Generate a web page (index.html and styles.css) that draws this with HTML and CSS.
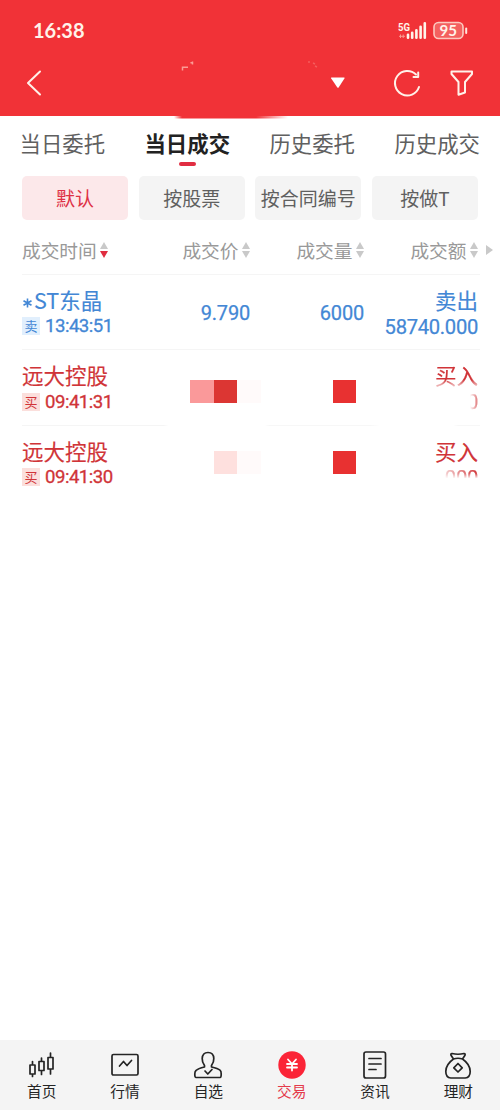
FILE: index.html
```html
<!DOCTYPE html>
<html lang="zh-CN">
<head>
<meta charset="utf-8">
<title>当日成交</title>
<link rel="stylesheet" href="styles.css">
</head>
<body>
<div class="app">
  <header class="header">
    <div class="status">
      <span class="clock">16:38</span>
      <svg class="signal" width="70" height="22" viewBox="0 0 70 22">
        <text class="net" x="0" y="11.5" textLength="12" lengthAdjust="spacingAndGlyphs">5G</text>
        <g class="faint"><path d="M1 17.300h6M2.500 15.500v3.500M5.200 15.500v3.500"/></g>
        <path class="bars" d="M10 18.700v-3M14.200 18.700v-5M18.400 18.700v-7.500M22.600 18.700v-11M26.800 18.700v-14.500"/>
        <rect class="cell" x="36" y="3.500" width="29" height="16" rx="4.500"/>
        <path class="tip" d="M68.200 9.500v4.500"/>
        <text class="charge" x="41.500" y="17" textLength="17.500" lengthAdjust="spacingAndGlyphs">95</text>
      </svg>
    </div>
    <svg class="toolbar" width="500" height="68" viewBox="0 0 500 68">
      <defs><linearGradient id="edge"><stop offset="0" stop-color="#f13237" stop-opacity="0"/><stop offset=".07" stop-color="#f13237"/><stop offset=".72" stop-color="#f13237"/><stop offset="1" stop-color="#f13237" stop-opacity="0"/></linearGradient></defs>
      <path class="line" d="M40 21.500 28 33l12 11.500"/>
      <path class="smudge" d="M182.500 20.500v-3.300h5.500M190.500 13l2-.800M192.500 11.500v3"/>
      <path class="smudge dim" d="M308 12h2M313 13l2 1M315 16l2 1"/>
      <path class="solid" d="M331.500 27.500h12.500q1 0 .4 1l-5.600 8.800q-.8 1-1.600 0l-6-8.800q-.5-1 .3-1z"/>
      <path class="line" d="M419 37A12.300 12.300 0 1 1 416 24.500M413.500 27h4.700v-4.500"/>
      <path class="line" d="M451.500 21.500h20.500v2.500l-7 8v10.500l-6.500 2.200V32l-7-8z"/>
      <rect x="174" y="65" width="114" height="3.500" fill="url(#edge)"/>
    </svg>
  </header>
  <nav class="tabs">
    <span>当日委托</span><span class="current">当日成交</span><span>历史委托</span><span>历史成交</span>
  </nav>
  <div class="chips">
    <span class="chip chosen">默认</span><span class="chip">按股票</span><span class="chip">按合同编号</span><span class="chip">按做T</span>
  </div>
  <div class="cols head">
    <span>成交时间<i class="sort desc"></i></span>
    <span>成交价<i class="sort"></i></span>
    <span>成交量<i class="sort"></i></span>
    <span>成交额<i class="sort"></i></span>
    <i class="more"></i>
  </div>
  <main>
    <section class="cols row sell">
      <div><div class="name"><svg class="star" width="12" height="12" viewBox="0 0 12 12"><path d="M5.500 1.500v9M1.500 3.700l8 4.600M9.500 3.700l-8 4.600"/></svg>ST东晶</div><div class="time"><b>卖</b><span>13:43:51</span></div></div>
      <div class="num">9.790</div>
      <div class="num">6000</div>
      <div class="amount"><div class="name">卖出</div><div class="sum">58740.000</div></div>
    </section>
    <section class="cols row buy">
      <div><div class="name">远大控股</div><div class="time"><b>买</b><span>09:41:31</span></div></div>
      <div class="mosaic price"><i class="pink"></i><i class="deep"></i><i class="pale"></i></div>
      <div class="mosaic volume"><i class="red"></i></div>
      <div class="amount"><div class="name worn">买入</div><div class="sum half">0</div></div>
    </section>
    <section class="cols row buy last">
      <div><div class="name">远大控股</div><div class="time"><b>买</b><span>09:41:30</span></div></div>
      <div class="mosaic price"><i class="blush"></i><i class="pale"></i></div>
      <div class="mosaic volume"><i class="red"></i></div>
      <div class="amount"><div class="name">买入</div><div class="sum tops">.000</div></div>
    </section>
  </main>
  <footer class="dock">
    <a><svg width="30" height="30" viewBox="0 0 30 30"><path d="M3 15h5v9H3zM12 11.500h5v9h-5zM21 7.500h5v11.500h-5zM5.500 11.500v3.500M5.500 24v2.500M14.500 8v3.500M14.500 20.500v4M23.500 3v4.500M23.500 19v5"/></svg>首页</a>
    <a><svg width="30" height="30" viewBox="0 0 30 30"><rect x="2" y="4.500" width="26" height="20.500" rx="1.500"/><path d="M9.500 16l4-4.500 3.500 4 4.500-5"/></svg>行情</a>
    <a><svg width="30" height="30" viewBox="0 0 30 30"><path d="M11.500 15.500Q9 12 9.200 8.500C9.400 4.500 11.500 2.500 15 2.500s5.700 2 5.800 6Q21 12 18.500 15.500v1.500q6.500 1.500 8.500 3.200 1.300 1 1.200 3.800 0 3.500-1 3.500H2.800q-1 0-1-3.500 0-2.500 1.200-3.500 2-2 8.500-3.500zM12 21l2.800 3 4.200-4.500"/></svg>自选</a>
    <a class="active"><svg width="30" height="30" viewBox="0 0 30 30"><circle cx="15" cy="15" r="13.700"/><path class="yen" d="M11 9.500l4 4.500 4-4.500M10 14h10M10 17.500h10M15 14v6.500"/></svg>交易</a>
    <a><svg width="30" height="30" viewBox="0 0 30 30"><rect x="4" y="2" width="21.500" height="26" rx="2"/><path d="M9 8.500h12M9 14h12M9 19.500h7"/></svg>资讯</a>
    <a><svg width="30" height="30" viewBox="0 0 30 30"><path d="M10.500 9 8 5.200q-.5-1.500 1-1.700 6 1.500 12 0 1.500.2 1 1.700L19.500 9M10.500 9q4.500-1.500 9 0c5 3.500 7.700 7.800 7.700 12.500q0 6-5 6.500H7.800q-5-.5-5-6.500c0-4.700 2.700-9 7.700-12.500zM15 13.500l4.200 4.300L15 22l-4.200-4.200z"/></svg>理财</a>
  </footer>
</div>
</body>
</html>
```
FILE: styles.css
```css
* { box-sizing: border-box; }
body { margin: 0; background: #fff; font-family: "Noto Sans CJK SC", sans-serif; }
.app { width: 500px; height: 1110px; display: flex; flex-direction: column; overflow: hidden; }
i { font-style: normal; }
svg { display: block; }

.header { height: 115.5px; flex: none; background: #f13237; }
.status { height: 50px; padding: 19px 32px 0 33px; display: flex; justify-content: space-between; }
.clock { font: 700 20px/23px Lato, sans-serif; color: #fff3ea; letter-spacing: 0; }
.net { font: 700 11px Roboto, sans-serif; fill: #fff3ea; }
.charge { font: 700 15.5px Lato, sans-serif; fill: #fff3ea; }
.faint { stroke: #f99a90; stroke-width: 1; }
.bars { stroke: #fff3ea; stroke-width: 2.6; stroke-linecap: round; }
.cell { fill: #f4605f; stroke: #fcc9bf; stroke-width: 1.6; }
.tip { stroke: #ffe5dc; stroke-width: 2; stroke-linecap: round; }
.toolbar { overflow: visible; }
.line { fill: none; stroke: #fff1e9; stroke-width: 2; stroke-linejoin: round; stroke-linecap: round; }
.solid { fill: #fff; }
.smudge { fill: none; stroke: #fb9b94; stroke-width: 1.5; }
.dim { opacity: .4; }

.tabs { height: 60.5px; flex: none; padding: 9px 20px 0 19.5px; display: flex; justify-content: space-between; font-size: 21.4px; line-height: 36px; color: #606060; }
.current { font-weight: 700; color: #222; }
.current::after { content: ""; display: block; width: 17px; height: 4px; margin: 1px auto 0; border-radius: 2px; background: #e12d42; }

.chips { flex: none; padding: 0 22px; display: grid; grid-template-columns: repeat(4, 106px); gap: 10.7px; }
.chip { height: 43.5px; border-radius: 5px; background: #f4f4f4; color: #606060; font-size: 19px; line-height: 43px; text-align: center; white-space: nowrap; }
.chosen { background: #fce8ea; color: #de3045; }

.cols { display: grid; grid-template-columns: 119px 109px 114px 114px; margin: 0 20px 0 22px; }
.head { height: 54px; flex: none; padding-bottom: 4px; padding-top: 11px; grid-template-columns: 113.5px 114px 114px 114px 16px; margin-right: 5px; font-size: 18.7px; line-height: 38px; color: #999; white-space: nowrap; }
.head > span { display: flex; align-items: center; justify-content: flex-end; }
.head > span:first-child { justify-content: flex-start; }
.sort { margin-left: 3px; display: grid; gap: 2px; }
.sort::before, .sort::after { content: ""; border: solid transparent; border-width: 0 4.5px; }
.sort::before { border-bottom: 7px solid #c9c9c9; }
.sort::after { border-top: 7px solid #c9c9c9; }
.desc::after { border-top-color: #e02d40; }
.more { align-self: center; margin-left: 8px; border: solid transparent; border-width: 5px 0 5px 7px; border-left-color: #c9c9c9; width: 0; }

.row { height: 75.5px; border-top: 1px solid #f5f5f5; }
.sell { color: #4387d5; }
.buy { color: #d03438; }
.name { height: 39px; padding-top: 10px; font-size: 21.5px; line-height: 30px; font-weight: 400; white-space: nowrap; -webkit-text-stroke: .15px; }
.star { display: inline-block; fill: none; stroke: currentColor; stroke-width: 1.6; vertical-align: 0; }
.time { height: 25px; display: flex; align-items: center; font: 400 18.6px/25px Roboto, sans-serif; }
.time span { margin-left: 5px; padding-top: 1px; letter-spacing: -.5px; -webkit-text-stroke: .3px; }
.time b { width: 18px; height: 18px; text-align: center; font: 400 13px/17px "Noto Sans CJK SC", sans-serif; background: #e1effd; }
.buy .time b { background: #fbdfdc; }
.num { text-align: right; font: 400 20px/77px Roboto, sans-serif; letter-spacing: -.2px; -webkit-text-stroke: .25px; }
.amount { text-align: right; }
.sum { font: 400 20.2px/26px Roboto, sans-serif; letter-spacing: -.3px; -webkit-text-stroke: .25px; }
.worn { -webkit-mask-image: linear-gradient(#000 76%, rgba(0,0,0,.4) 90%); }
.half { -webkit-mask-image: linear-gradient(to right, transparent calc(100% - 8px), rgba(0,0,0,.7)); }
.tops { -webkit-mask-image: linear-gradient(to bottom, #000 32%, transparent 52%), linear-gradient(to right, transparent 62%, #000); -webkit-mask-composite: source-in; }

.mosaic { display: flex; align-items: flex-start; padding-top: 29.5px; }
.price { padding-left: 49px; }
.volume { padding-left: 82.500px; }
.mosaic i { width: 23.7px; height: 23.7px; flex: none; }
.last .mosaic { padding-top: 25px; }
.last .price { padding-left: 72.700px; }
.pink { background: #fa999a; }
.deep { background: #dc3633; }
.red { background: #e83131; }
.blush { background: #fee0de; }
.pale { background: #fffafa; }
.last { border-image: linear-gradient(to right, #f5f5f5 31%, #fff 32%, #fff 53%, #f7f7f7 54%, #f7f7f7 76%, #fff 78%, #fff 94%, #f7f7f7 95%) 1; }

.dock { margin-top: auto; height: 70px; background: #f4f4f4; display: grid; grid-template-columns: repeat(6, 1fr); }
.dock a { display: flex; flex-direction: column; align-items: center; padding-top: 10px; font-size: 14.7px; line-height: 21px; color: #242424; }
.dock svg { fill: none; stroke: #242424; stroke-width: 1.7; stroke-linejoin: round; stroke-linecap: round; }
.dock .active { color: #e43a4b; }
.active circle { fill: #fb2437; stroke: none; }
.dock .yen { stroke: #fff; stroke-width: 1.8; }
```
